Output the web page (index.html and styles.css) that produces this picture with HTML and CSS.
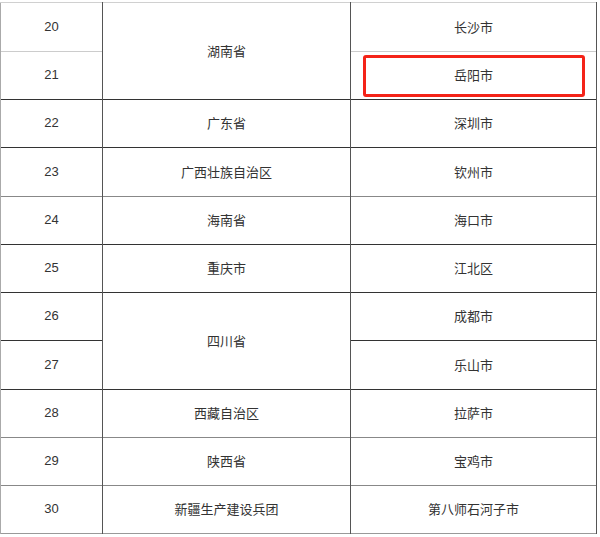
FILE: index.html
```html
<!DOCTYPE html>
<html lang="zh">
<head>
<meta charset="utf-8">
<link rel="stylesheet" href="styles.css">
</head>
<body>
<table class="grid">
  <colgroup><col class="c1"><col class="c2"><col class="c3"></colgroup>
  <tr class="r49 first"><td>20</td><td rowspan="2">湖南省</td><td>长沙市</td></tr>
  <tr class="r48 soft"><td>21</td><td class="hl-cell"><span class="hl"></span>岳阳市</td></tr>
  <tr class="r48 dark"><td>22</td><td>广东省</td><td>深圳市</td></tr>
  <tr class="r49 dark"><td>23</td><td>广西壮族自治区</td><td>钦州市</td></tr>
  <tr class="r48 mid"><td>24</td><td>海南省</td><td>海口市</td></tr>
  <tr class="r48 dark"><td>25</td><td>重庆市</td><td>江北区</td></tr>
  <tr class="r48 dark"><td>26</td><td rowspan="2">四川省</td><td>成都市</td></tr>
  <tr class="r49 dark"><td>27</td><td>乐山市</td></tr>
  <tr class="r48 dark"><td>28</td><td>西藏自治区</td><td>拉萨市</td></tr>
  <tr class="r48 mid"><td>29</td><td>陕西省</td><td>宝鸡市</td></tr>
  <tr class="r48 mid"><td>30</td><td>新疆生产建设兵团</td><td>第八师石河子市</td></tr>
</table>
</body>
</html>
```

FILE: styles.css
```css
html, body { margin: 0; padding: 0; background: #fff; }
body { padding-top: 2px; }
.grid {
  border-collapse: collapse;
  table-layout: fixed;
  width: 597px;
  font-family: "Liberation Sans", "Noto Sans CJK SC", sans-serif;
  font-size: 13px;
  color: #333;
  border-left: 1px solid #aaa;
  border-right: 1px solid #666;
  border-bottom: 1px solid #999;
}
.c1 { width: 102px; }
.c2 { width: 248px; }
.c3 { width: 246px; }
.grid td {
  padding: 0 0 2px 0;
  text-align: center;
  vertical-align: middle;
  border-left: 1px solid #555;
  border-right: 1px solid #555;
  border-top: 1px solid #555;
}
.grid td:first-child { border-left-color: #aaa; }
.r48 td { height: 45px; }
.r49 td { height: 46px; }
.first td { border-top-color: #d0d0d0; }
.soft td { border-top-color: #ccc; }
.dark td { border-top-color: #333; }
.mid td { border-top-color: #888; }
.hl-cell { position: relative; }
.hl {
  position: absolute;
  left: 12px;
  right: 11px;
  top: 3px;
  bottom: 2px;
  border: 3px solid #f42318;
  border-radius: 3px;
}
```
